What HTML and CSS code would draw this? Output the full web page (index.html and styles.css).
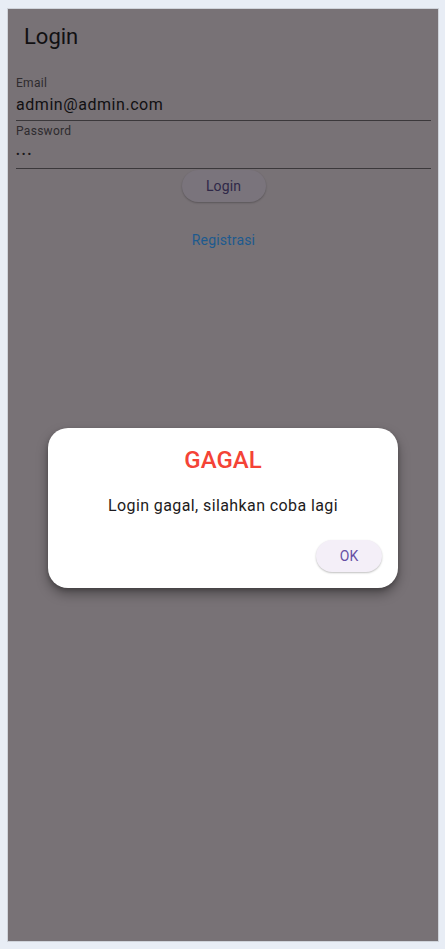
FILE: index.html
```html
<!DOCTYPE html>
<html>
<head>
<meta charset="utf-8">
<link rel="stylesheet" href="styles.css">
</head>
<body>
<div class="frame">
  <header class="appbar"><h1 class="title">Login</h1></header>
  <form class="form">
    <div class="field field-first">
      <label class="label">Email</label>
      <div class="value">admin@admin.com</div>
      <div class="underline"></div>
    </div>
    <div class="field">
      <label class="label">Password</label>
      <div class="value dots">•••</div>
      <div class="underline"></div>
    </div>
    <div class="actions">
      <button type="button" class="btn-login">Login</button>
      <a class="link">Registrasi</a>
    </div>
  </form>
  <div class="scrim">
    <div class="dialog">
      <div class="dlg-title">GAGAL</div>
      <div class="dlg-content">Login gagal, silahkan coba lagi</div>
      <div class="dlg-actions"><button type="button" class="btn-ok">OK</button></div>
    </div>
  </div>
</div>
</body>
</html>
```
FILE: styles.css
```css
html, body { margin: 0; padding: 0; }
body {
  background: #e8edf5;
  padding: 8px 6px 7px 7px;
  font-family: Roboto, "Liberation Sans", sans-serif;
}
.frame {
  position: relative;
  height: 932px;
  border: 1px solid #cfd3da;
  background: #787276;
  overflow: hidden;
}
.appbar {
  height: 55px;
  display: flex;
  align-items: center;
  padding-left: 16px;
}
.title {
  margin: 0;
  font-size: 22px;
  font-weight: 400;
  color: #111012;
}
.form {
  padding: 9px 7px 0 8px;
  margin: 0;
}
.field {
  padding-top: 2px;
  display: flex;
  flex-direction: column;
}
.label {
  font-size: 12px;
  line-height: 16px;
  color: #2e2b2e;
  letter-spacing: 0.3px;
}
.value {
  font-size: 16px;
  line-height: 24px;
  color: #111012;
  letter-spacing: 0.55px;
  margin-top: 2px;
  margin-bottom: 3px;
}
.dots {
  font-size: 11px;
  letter-spacing: 2px;
  margin-top: 4px;
  margin-bottom: 1px;
  color: #1a181a;
}
.underline { height: 1px; background: #3b383b; }
.actions {
  display: flex;
  flex-direction: column;
  align-items: center;
}
.btn-login {
  margin-top: 1px;
  width: 84px;
  height: 32px;
  border: none;
  border-radius: 16px;
  background: #7a747c;
  box-shadow: 0 1px 2px rgba(0,0,0,0.25);
  font-family: inherit;
  font-size: 14px;
  letter-spacing: 0.1px;
  color: #2f2848;
}
.link {
  margin-top: 30px;
  font-size: 14px;
  letter-spacing: 0.15px;
  color: #1d5a8e;
}
.scrim {
  position: absolute;
  inset: 0;
  display: flex;
  justify-content: center;
  align-items: flex-start;
  padding-top: 419px;
}
.dialog {
  width: 350px;
  height: 160px;
  box-sizing: border-box;
  background: #ffffff;
  border-radius: 20px;
  box-shadow: 0 6px 12px rgba(0,0,0,0.35), 0 2px 4px rgba(0,0,0,0.2);
  display: flex;
  flex-direction: column;
  align-items: center;
  padding: 18px 16px 16px;
}
.dlg-title {
  font-size: 24px;
  line-height: 28px;
  font-weight: 500;
  color: #f44336;
}
.dlg-content {
  margin-top: 20px;
  font-size: 16px;
  line-height: 24px;
  letter-spacing: 0.4px;
  color: #1d1b20;
}
.dlg-actions {
  margin-top: auto;
  align-self: stretch;
  display: flex;
  justify-content: flex-end;
}
.btn-ok {
  width: 66px;
  height: 32px;
  border: none;
  border-radius: 16px;
  background: #f4eff8;
  box-shadow: 0 1px 2px rgba(0,0,0,0.25);
  font-family: inherit;
  font-size: 14px;
  color: #6750a4;
}
```
